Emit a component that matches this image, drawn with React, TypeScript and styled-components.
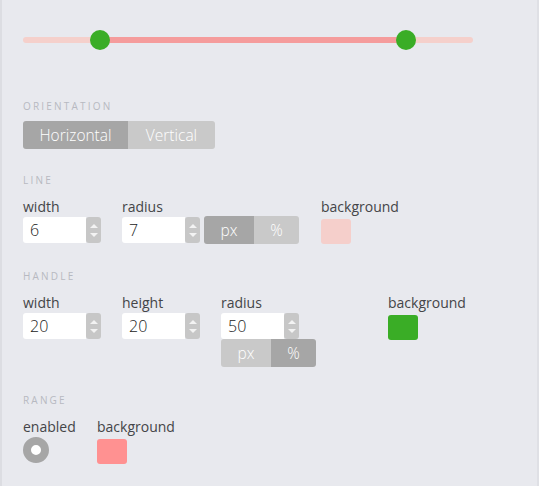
import React, { useState } from "react"
import styled, { createGlobalStyle } from "styled-components"

const FONT = `"Open Sans", Lato, sans-serif`

const GlobalStyle = createGlobalStyle`
  html, body {
    margin: 0;
    padding: 0;
    background: #e8e9ee;
  }
  body {
    font-family: ${FONT};
  }
`

const Panel = styled.div`
  box-sizing: border-box;
  width: 539px;
  min-height: 486px;
  background: #e8e9ee;
  border-left: 2px solid #dcdde2;
  border-right: 2px solid #dfe0e5;
  padding: 30px 0 0 21px;
`

const Preview = styled.div`
  position: relative;
  width: 450px;
  height: 20px;
  display: flex;
  align-items: center;
`

const Track = styled.div`
  position: relative;
  width: 100%;
  height: 6px;
  border-radius: 3px;
  background: #f5d0cb;
`

const Range = styled.div`
  position: absolute;
  top: 0;
  bottom: 0;
  background: #f59c9c;
`

const Handle = styled.div`
  position: absolute;
  top: 50%;
  width: 20px;
  height: 20px;
  margin: -10px 0 0 -10px;
  border-radius: 50%;
  background: #3aad26;
`

const SectionTitle = styled.div<{ $top: number }>`
  margin-top: ${({ $top }) => $top}px;
  font-size: 10px;
  line-height: 12px;
  letter-spacing: 2.2px;
  color: #b7b9c1;
  text-transform: uppercase;
`

const Segmented = styled.div<{ $top?: number }>`
  display: inline-flex;
  margin-top: ${({ $top }) => $top ?? 0}px;
  border-radius: 3px;
  overflow: hidden;
`

const Segment = styled.button<{ $active: boolean; $w: number; $h: number }>`
  width: ${({ $w }) => $w}px;
  height: ${({ $h }) => $h}px;
  border: 0;
  padding: 0;
  font-family: ${FONT};
  font-size: 15.5px;
  font-weight: 300;
  color: #ffffff;
  background: ${({ $active }) => ($active ? "#a6a6a6" : "#c9c9c9")};
  cursor: pointer;
`

const Row = styled.div<{ $top: number }>`
  display: flex;
  align-items: flex-start;
  margin-top: ${({ $top }) => $top}px;
`

const Field = styled.div<{ $w?: number; $ml?: number }>`
  display: flex;
  flex-direction: column;
  width: ${({ $w }) => ($w ? `${$w}px` : "auto")};
  margin-left: ${({ $ml }) => $ml ?? 0}px;
`

const Label = styled.div`
  font-size: 14px;
  line-height: 17px;
  color: #444548;
  margin-bottom: 2px;
  white-space: nowrap;
`

const InputLine = styled.div`
  display: flex;
  align-items: flex-start;
  gap: 4px;
`

const NumberBox = styled.div`
  display: flex;
  width: 78px;
  height: 26px;
`

const NumberInput = styled.input`
  box-sizing: border-box;
  width: 63px;
  height: 26px;
  border: 0;
  border-radius: 3px 0 0 3px;
  outline: none;
  padding: 0 0 0 7px;
  font-family: ${FONT};
  font-size: 16px;
  font-weight: 300;
  color: #222222;
  background: #ffffff;
`

const Spinner = styled.div`
  width: 15px;
  height: 26px;
  border-radius: 3px;
  background: #c7c7c7;
  display: flex;
  flex-direction: column;
  align-items: center;
  justify-content: center;
  gap: 5px;
`

const Arrow = styled.div<{ $up: boolean }>`
  width: 0;
  height: 0;
  border-left: 4px solid transparent;
  border-right: 4px solid transparent;
  ${({ $up }) =>
    $up ? "border-bottom: 4px solid #f3f3f3;" : "border-top: 4px solid #f3f3f3;"}
`

const Swatch = styled.div<{ $color: string }>`
  width: 30px;
  height: 25px;
  margin-top: 2px;
  border-radius: 3px;
  background: ${({ $color }) => $color};
`

const Radio = styled.div`
  width: 26px;
  height: 26px;
  box-sizing: border-box;
  border-radius: 50%;
  border: 8px solid #a6a6a6;
  background: #ffffff;
`

function NumberField({ value }: { value: number }) {
  const [v, setV] = useState(String(value))
  return (
    <NumberBox>
      <NumberInput value={v} onChange={(e) => setV(e.target.value)} />
      <Spinner>
        <Arrow $up />
        <Arrow $up={false} />
      </Spinner>
    </NumberBox>
  )
}

function UnitToggle({ unit, onChange }: { unit: string; onChange: (u: string) => void }) {
  return (
    <Segmented>
      <Segment $w={50} $h={28} $active={unit === "px"} onClick={() => onChange("px")}>px</Segment>
      <Segment $w={45} $h={28} $active={unit === "%"} onClick={() => onChange("%")}>%</Segment>
    </Segmented>
  )
}

export default function App() {
  const [orientation, setOrientation] = useState("horizontal")
  const [lineUnit, setLineUnit] = useState("px")
  const [handleUnit, setHandleUnit] = useState("%")

  const from = 77
  const to = 383

  return (
    <>
      <GlobalStyle />
      <Panel>
        <Preview>
          <Track>
            <Range style={{ left: from, width: to - from }} />
            <Handle style={{ left: from }} />
            <Handle style={{ left: to }} />
          </Track>
        </Preview>

        <SectionTitle $top={50}>Orientation</SectionTitle>
        <Segmented $top={9}>
          <Segment $w={105} $h={28} $active={orientation === "horizontal"} onClick={() => setOrientation("horizontal")}>
            Horizontal
          </Segment>
          <Segment $w={87} $h={28} $active={orientation === "vertical"} onClick={() => setOrientation("vertical")}>
            Vertical
          </Segment>
        </Segmented>

        <SectionTitle $top={25}>Line</SectionTitle>
        <Row $top={12}>
          <Field $w={99}>
            <Label>width</Label>
            <NumberField value={6} />
          </Field>
          <Field>
            <Label>radius</Label>
            <InputLine>
              <NumberField value={7} />
              <div style={{ marginTop: -1 }}>
                <UnitToggle unit={lineUnit} onChange={setLineUnit} />
              </div>
            </InputLine>
          </Field>
          <Field $ml={22}>
            <Label>background</Label>
            <Swatch $color="#f5cfcb" />
          </Field>
        </Row>

        <SectionTitle $top={26}>Handle</SectionTitle>
        <Row $top={12}>
          <Field $w={99}>
            <Label>width</Label>
            <NumberField value={20} />
          </Field>
          <Field $w={99}>
            <Label>height</Label>
            <NumberField value={20} />
          </Field>
          <Field $w={95}>
            <Label>radius</Label>
            <NumberField value={50} />
            <UnitToggle unit={handleUnit} onChange={setHandleUnit} />
          </Field>
          <Field $ml={72}>
            <Label>background</Label>
            <Swatch $color="#3aad26" />
          </Field>
        </Row>

        <SectionTitle $top={27}>Range</SectionTitle>
        <Row $top={12}>
          <Field $w={74}>
            <Label>enabled</Label>
            <Radio />
          </Field>
          <Field>
            <Label>background</Label>
            <Swatch $color="#ff9191" />
          </Field>
        </Row>
      </Panel>
    </>
  )
}
